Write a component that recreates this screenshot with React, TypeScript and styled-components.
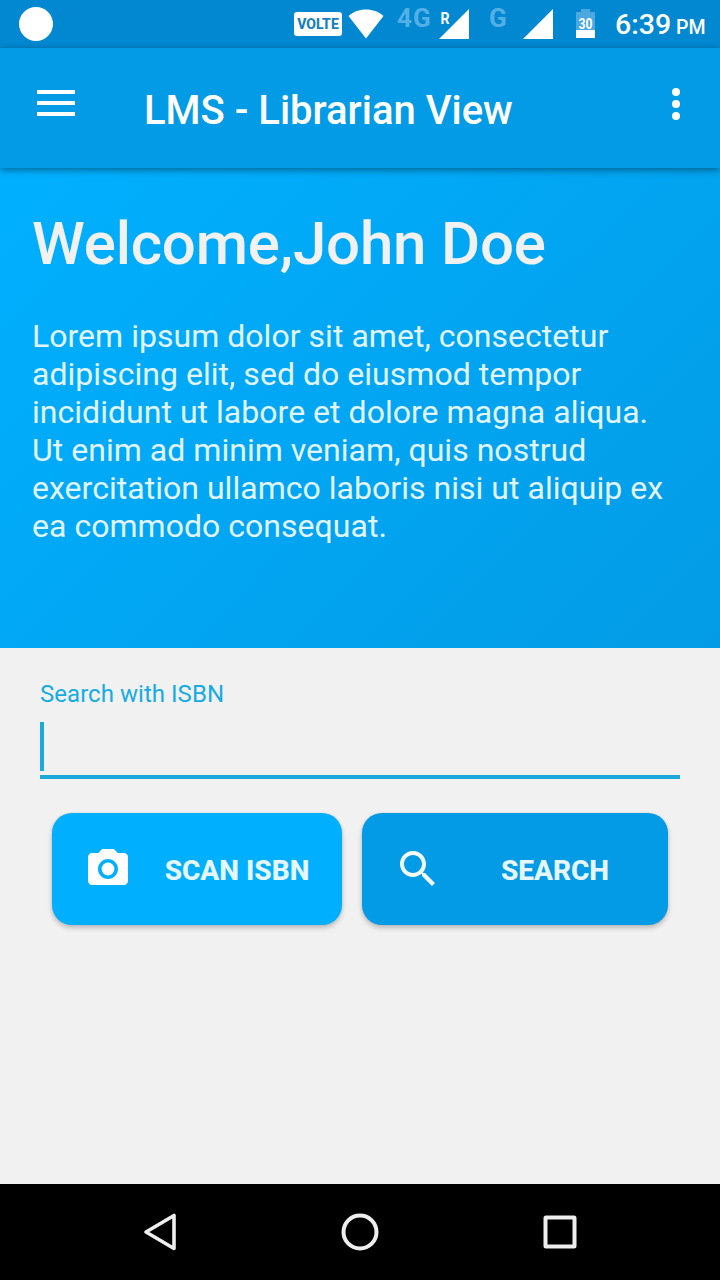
import React from "react";
import styled, { createGlobalStyle } from "styled-components";

const GlobalStyle = createGlobalStyle`
  *, *::before, *::after { box-sizing: border-box; }
  html, body { margin: 0; padding: 0; }
  body { font-family: Roboto, "Liberation Sans", sans-serif; }
`;

const Screen = styled.div`
  width: 720px;
  height: 1280px;
  display: flex;
  flex-direction: column;
  background: #f1f1f1;
  overflow: hidden;
`;

const StatusBar = styled.div`
  height: 48px;
  flex: none;
  display: flex;
  align-items: flex-start;
  padding: 0 0 0 19px;
  background: #0288d1;
  color: #fff;
`;

const Notification = styled.div`
  flex: none;
  width: 34px;
  height: 34px;
  margin-top: 7px;
  border-radius: 50%;
  background: #fff;
`;

const VolteBadge = styled.div`
  flex: none;
  width: 48px;
  height: 24px;
  margin: 12px 6px 0 241px;
  border-radius: 3px;
  background: #fff;
  color: #1680bf;
  font-size: 14px;
  font-weight: 800;
  line-height: 25px;
  text-align: center;
`;

const StatusIcon = styled.svg<{ $gap?: number }>`
  flex: none;
  display: block;
  margin: 9px ${(p) => p.$gap ?? 0}px 0 0;
`;

const NetworkType = styled.span<{ $width: number }>`
  flex: none;
  width: ${(p) => p.$width}px;
  margin-top: 4px;
  font-size: 26px;
  line-height: 28px;
  font-weight: 700;
  letter-spacing: 1px;
  color: #53b0e6;
`;

const Clock = styled.div`
  flex: none;
  margin-top: 8px;
  white-space: nowrap;
  font-size: 28.5px;
  line-height: 34px;
  font-weight: 500;
`;

const Meridiem = styled.span`
  font-size: 19.5px;
  margin-left: 5px;
`;

const AppBar = styled.header`
  position: relative;
  z-index: 1;
  height: 120px;
  flex: none;
  display: flex;
  align-items: flex-start;
  padding: 0 36px 0 37px;
  background: #039be5;
  box-shadow: 0 2px 7px rgba(0, 0, 0, 0.42);
`;

const MenuIcon = styled.svg`
  display: block;
  margin-top: 42px;
`;

const Title = styled.h1`
  flex: 1;
  margin: 39px 0 0 69px;
  font-size: 40px;
  line-height: 48px;
  font-weight: 500;
  color: #fff;
  white-space: nowrap;
`;

const MoreIcon = styled.svg`
  display: block;
  margin: 40px 4px 0 0;
`;

const Hero = styled.section`
  height: 480px;
  flex: none;
  padding: 41px 32px 0;
  background: linear-gradient(135deg, #00b0ff 0%, #039be5 100%);
`;

const Welcome = styled.h2`
  margin: 0;
  font-size: 60px;
  line-height: 70px;
  font-weight: 500;
  letter-spacing: -0.2px;
  color: #f1f1f1;
  white-space: nowrap;
`;

const Intro = styled.p`
  margin: 38px 0 0;
  font-size: 32px;
  line-height: 38px;
  letter-spacing: 0.03px;
  color: #e1f5fe;
  white-space: nowrap;
`;

const Content = styled.main`
  flex: 1;
  padding: 32px 40px 0;
`;

const FieldLabel = styled.label`
  display: block;
  font-size: 24px;
  line-height: 28px;
  letter-spacing: 0.04px;
  color: #16abe2;
`;

const Field = styled.div`
  height: 57px;
  margin-top: 14px;
  border-bottom: 4px solid #1caadb;
`;

const Caret = styled.div`
  width: 4px;
  height: 49px;
  background: #1caadb;
`;

const Actions = styled.div`
  display: flex;
  gap: 20px;
  margin: 34px 12px 0;
`;

const ActionButton = styled.button<{ $bg: string; $width: number; $inset: number }>`
  display: flex;
  align-items: center;
  width: ${(p) => p.$width}px;
  height: 112px;
  padding: 0 0 0 ${(p) => p.$inset}px;
  border: 0;
  border-radius: 20px;
  background: ${(p) => p.$bg};
  box-shadow: 0 3px 5px rgba(0, 0, 0, 0.22), 0 0 3px rgba(0, 0, 0, 0.08);
  font-family: inherit;
`;

const ActionIcon = styled.svg`
  flex: none;
  display: block;
`;

const ActionLabel = styled.span<{ $color: string }>`
  flex: 1;
  font-size: 28px;
  line-height: 34px;
  font-weight: 800;
  text-align: center;
  padding-top: 3px;
  color: ${(p) => p.$color};
`;

const NavBar = styled.nav`
  height: 96px;
  flex: none;
  display: flex;
  align-items: center;
  justify-content: center;
  gap: 160px;
  background: #000;
`;

const introLines = [
  "Lorem ipsum dolor sit amet, consectetur",
  "adipiscing elit, sed do eiusmod tempor",
  "incididunt ut labore et dolore magna aliqua.",
  "Ut enim ad minim veniam, quis nostrud",
  "exercitation ullamco laboris nisi ut aliquip ex",
  "ea commodo consequat.",
];

export default function App() {
  return (
    <>
      <GlobalStyle />
      <Screen>
        <StatusBar>
          <Notification />
          <VolteBadge>VOLTE</VolteBadge>
          <StatusIcon width="36" height="30" viewBox="0 0 36 30" $gap={13}>
            <path d="M0.5 7C10 -1.6 26 -1.6 35.5 7L18 29.5Z" fill="#fff" />
          </StatusIcon>
          <NetworkType $width={42}>4G</NetworkType>
          <StatusIcon width="30" height="30" viewBox="0 0 30 30" $gap={20}>
            <path d="M30 0V30H0Z" fill="#fff" />
            <text x="1.500" y="14.500" fontSize="16" fontWeight="700" fill="#fff" fontFamily="Roboto" textLength="9" lengthAdjust="spacingAndGlyphs">R</text>
          </StatusIcon>
          <NetworkType $width={34}>G</NetworkType>
          <StatusIcon width="30" height="30" viewBox="0 0 30 30" $gap={23}>
            <path d="M30 0V30H0Z" fill="#fff" />
          </StatusIcon>
          <StatusIcon width="19" height="29" viewBox="0 0 19 29" $gap={20}>
            <path d="M5 0H14V3H19V29H0V3H5Z" fill="#4ba9df" />
            <path d="M0 21H19V29H0Z" fill="#fff" />
            <text x="9.5" y="19.500" fontSize="14" fontWeight="700" fill="#fff" textAnchor="middle" fontFamily="Roboto" textLength="14" lengthAdjust="spacingAndGlyphs">30</text>
          </StatusIcon>
          <Clock>
            6:39<Meridiem>PM</Meridiem>
          </Clock>
        </StatusBar>

        <AppBar>
          <MenuIcon width="38" height="27" viewBox="0 0 38 27">
            <path d="M0 0H38V4H0ZM0 11H38V15H0ZM0 22H38V26H0Z" fill="#fff" />
          </MenuIcon>
          <Title>LMS - Librarian View</Title>
          <MoreIcon width="8" height="32" viewBox="0 0 8 32">
            <circle cx="4" cy="4" r="4" fill="#fff" />
            <circle cx="4" cy="16" r="4" fill="#fff" />
            <circle cx="4" cy="28" r="4" fill="#fff" />
          </MoreIcon>
        </AppBar>

        <Hero>
          <Welcome>Welcome,John Doe</Welcome>
          <Intro>
            {introLines.map((line) => (
              <React.Fragment key={line}>
                {line}
                <br />
              </React.Fragment>
            ))}
          </Intro>
        </Hero>

        <Content>
          <FieldLabel>Search with ISBN</FieldLabel>
          <Field>
            <Caret />
          </Field>
          <Actions>
            <ActionButton $bg="#00b0ff" $width={290} $inset={32}>
              <ActionIcon width="48" height="48" viewBox="0 0 24 24" fill="#fff">
                <circle cx="12" cy="12" r="3.2" />
                <path d="M9 2L7.17 4H4c-1.1 0-2 .9-2 2v12c0 1.1.9 2 2 2h16c1.1 0 2-.9 2-2V6c0-1.1-.9-2-2-2h-3.170L15 2H9zm3 15c-2.760 0-5-2.240-5-5s2.240-5 5-5 5 2.240 5 5-2.240 5-5 5z" />
              </ActionIcon>
              <ActionLabel $color="#e6f6ff">SCAN ISBN</ActionLabel>
            </ActionButton>
            <ActionButton $bg="#039be5" $width={306} $inset={32}>
              <ActionIcon width="48" height="48" viewBox="0 0 24 24" fill="#f4fcff">
                <path d="M15.5 14h-.79l-.28-.27C15.410 12.590 16 11.110 16 9.500 16 5.910 13.090 3 9.500 3S3 5.910 3 9.500 5.910 16 9.500 16c1.610 0 3.090-.59 4.230-1.570l.27.28v.79l5 4.990L20.490 19l-4.990-5zm-6 0C7.010 14 5 11.990 5 9.500S7.010 5 9.500 5 14 7.010 14 9.500 11.990 14 9.500 14z" />
              </ActionIcon>
              <ActionLabel $color="#e6f6ff">SEARCH</ActionLabel>
            </ActionButton>
          </Actions>
        </Content>

        <NavBar>
          <svg width="40" height="40" viewBox="0 0 40 40" fill="none" stroke="#eee" strokeWidth="3.6" strokeLinejoin="round">
            <path d="M34 3.500V36.500L6 20Z" />
          </svg>
          <svg width="40" height="40" viewBox="0 0 40 40" fill="none" stroke="#eee" strokeWidth="4">
            <circle cx="20" cy="20" r="16.500" />
          </svg>
          <svg width="40" height="40" viewBox="0 0 40 40" fill="none" stroke="#eee" strokeWidth="4">
            <rect x="5.500" y="5.500" width="29" height="29" rx="0.500" strokeLinejoin="round" />
          </svg>
        </NavBar>
      </Screen>
    </>
  );
}
